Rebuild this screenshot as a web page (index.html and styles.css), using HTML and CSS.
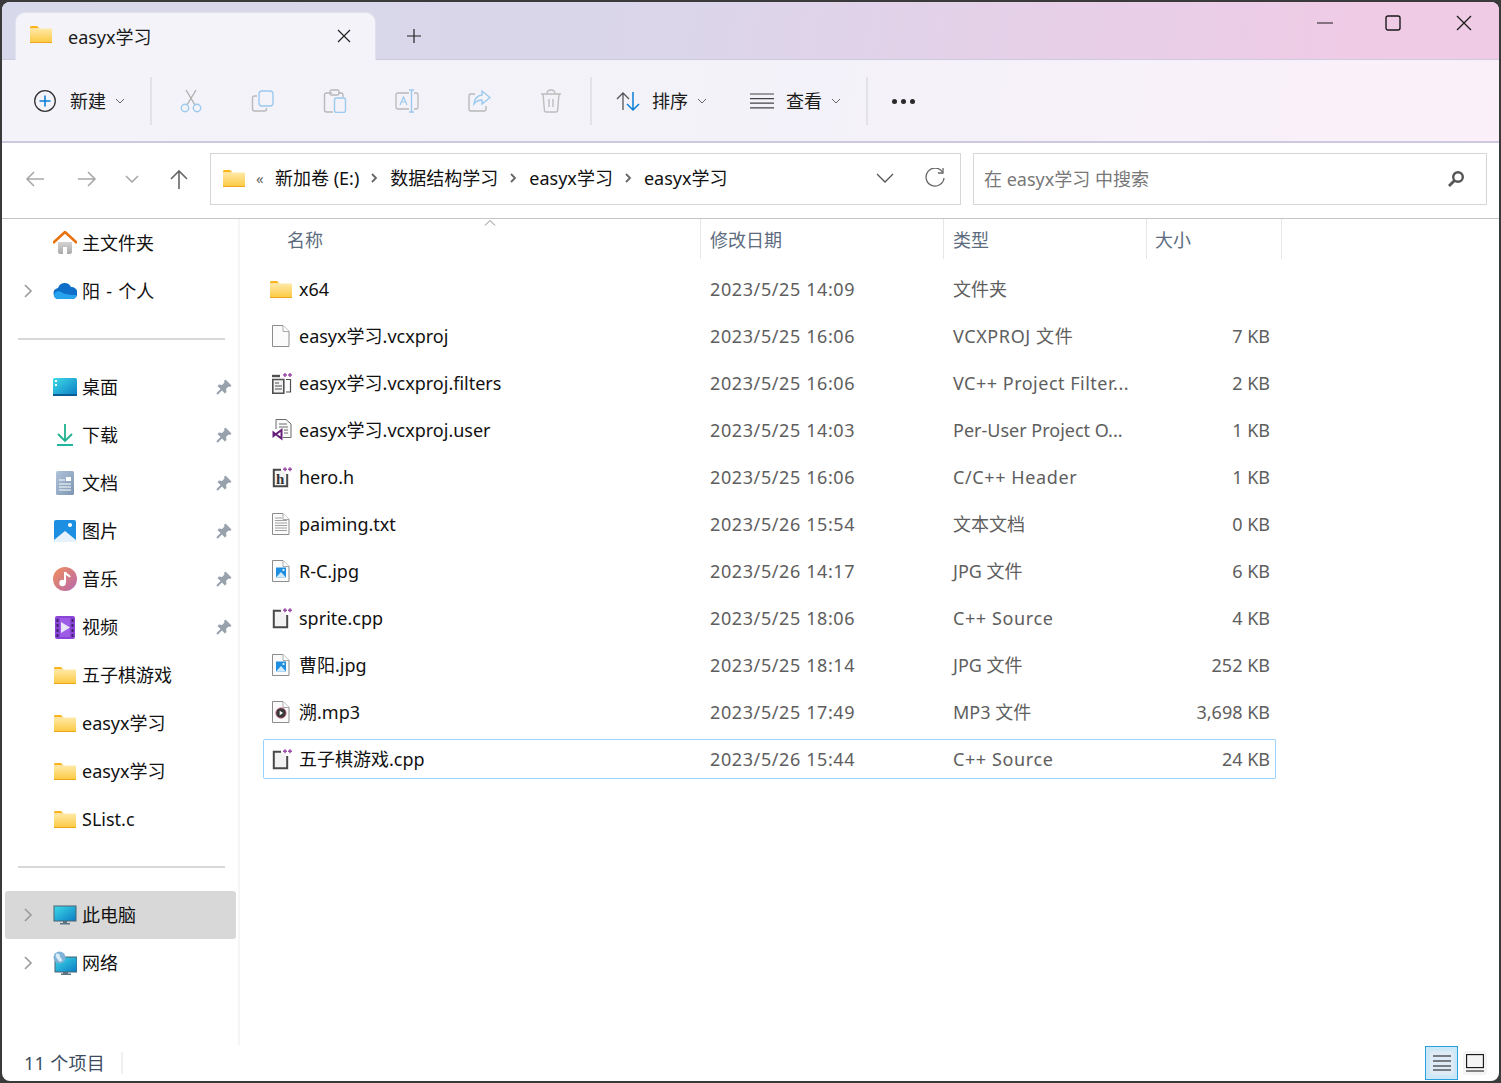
FILE: index.html
```html
<!DOCTYPE html>
<html lang="zh-CN">
<head>
	<meta charset="UTF-8">
	<title>easyx学习</title>
	<link rel="stylesheet" href="styles.css">
</head>
<body>
	<svg class="defs" width="0" height="0">
		<defs>
			<linearGradient id="g-folder" x1="0" y1="0" x2="0" y2="1">
				<stop offset="0" stop-color="#fee9a8"/><stop offset="1" stop-color="#fdc93f"/>
			</linearGradient>
			<linearGradient id="g-screen" x1="0" y1="0" x2="1" y2="1">
				<stop offset="0" stop-color="#3fdbe8"/><stop offset="1" stop-color="#0a7cc4"/>
			</linearGradient>
			<linearGradient id="g-doc" x1="0" y1="0" x2="1" y2="1">
				<stop offset="0" stop-color="#b0c4da"/><stop offset="1" stop-color="#7d95b1"/>
			</linearGradient>
			<linearGradient id="g-music" x1="0" y1="0" x2="1" y2="1">
				<stop offset="0" stop-color="#f0905a"/><stop offset="1" stop-color="#b868b0"/>
			</linearGradient>
			<linearGradient id="g-roof" x1="0" y1="0" x2="0" y2="1">
				<stop offset="0" stop-color="#d4d4d4"/><stop offset="1" stop-color="#a8a8a8"/>
			</linearGradient>
			<symbol id="i-folder" viewBox="0 0 22 17">
				<path d="M0 1.500C0 .7.7 0 1.500 0H7l2.500 2.500H0z" fill="#fbb41c"/>
				<rect y="2.500" width="22" height="14.500" fill="url(#g-folder)"/>
				<rect y="16" width="22" height="1" fill="#eca71c"/>
			</symbol>
			<symbol id="i-pin" viewBox="0 0 16 16">
				<path d="M9.500 .5l6 6L14 8l-1.500-.5L10 10l.5 3L9 14.500 1.500 7 3 5.500l3 .5 2.500-2.500L8 2z" fill="#98a2ac"/>
				<path d="M5.500 10.500L1 15" stroke="#98a2ac" stroke-width="2"/>
			</symbol>
			<symbol id="i-chev" viewBox="0 0 10 16">
				<path d="M2 2l6 6-6 6" fill="none" stroke="#9a9a9a" stroke-width="1.600"/>
			</symbol>
			<symbol id="i-down" viewBox="0 0 10 6">
				<path d="M1 1l4 4 4-4" fill="none" stroke="#666" stroke-width="1"/>
			</symbol>
			<symbol id="i-sep" viewBox="0 0 8 10">
				<path d="M2 1l4 4-4 4" fill="none" stroke="#666" stroke-width="1.800"/>
			</symbol>
			<symbol id="i-file" viewBox="0 0 20 22">
				<path d="M.5.5H11L17 6.500v15H.5z" fill="#fbfbfb" stroke="#8c8c8c"/>
				<path d="M11 .5v6h6" fill="#fff" stroke="#a8a8a8"/>
			</symbol>
			<symbol id="i-cpp" viewBox="0 0 20 22">
				<path d="M9 3.800H1.800v16.400h13.400V8" fill="#f2f2f2" stroke="#484848" stroke-width="2"/>
				<path d="M11 3.200h4M13 1.200v4M16 3.200h4M18 1.200v4" stroke="#9c4fa8" stroke-width="1.500" fill="none"/>
			</symbol>
			<symbol id="i-jpg" viewBox="0 0 20 22">
				<use href="#i-file"/>
				<rect x="4" y="7.500" width="10" height="10" fill="#1e8fe0"/>
				<path d="M4 17.500l5-5.500 5 5.500z" fill="#cfe8fa"/>
				<circle cx="11.500" cy="10" r="1.100" fill="#fff"/>
			</symbol>
		</defs>
	</svg>

	<div class="window">
		<header class="tabstrip">
			<div class="tab">
				<svg class="ico-folder"><use href="#i-folder"/></svg>
				<span class="tab-title">easyx学习</span>
				<svg class="tab-close" viewBox="0 0 14 14"><path d="M1 1l12 12M13 1L1 13" stroke="#222" stroke-width="1.200"/></svg>
			</div>
			<svg class="tab-add" viewBox="0 0 16 16"><path d="M8 1v14M1 8h14" stroke="#222" stroke-width="1.200"/></svg>
			<div class="win-btns">
				<svg class="win-min" viewBox="0 0 16 16"><path d="M0 8h16" stroke="#1a1a1a" stroke-width="1.200"/></svg>
				<svg class="win-max" viewBox="0 0 16 16"><rect x="1" y="1" width="14" height="14" rx="2" fill="none" stroke="#1a1a1a" stroke-width="1.400"/></svg>
				<svg class="win-close" viewBox="0 0 16 16"><path d="M1 1l14 14M15 1L1 15" stroke="#1a1a1a" stroke-width="1.300"/></svg>
			</div>
		</header>

		<div class="toolbar">
			<div class="tool tool-new">
				<svg class="ico-22" viewBox="0 0 22 22"><circle cx="11" cy="11" r="10.300" fill="none" stroke="#333" stroke-width="1.300"/><path d="M11 5.500v11M5.500 11h11" stroke="#0a7fd6" stroke-width="1.600"/></svg>
				<span class="tool-text">新建</span>
				<svg class="ico-down"><use href="#i-down"/></svg>
			</div>
			<i class="tool-sep"></i>
			<div class="tool-group">
				<svg class="ico-24" viewBox="0 0 24 24"><path d="M7 1l9 15M17 1L8 16" stroke="#adadad" stroke-width="1.300" fill="none"/><circle cx="6" cy="19" r="3.700" fill="none" stroke="#9cc9ee" stroke-width="1.400"/><circle cx="18" cy="19" r="3.700" fill="none" stroke="#9cc9ee" stroke-width="1.400"/></svg>
				<svg class="ico-24" viewBox="0 0 24 24"><path d="M6 7H3.500A2 2 0 0 0 1.500 9v11a2 2 0 0 0 2 2h10a2 2 0 0 0 2-2v-1" fill="none" stroke="#b9b9b9" stroke-width="1.400"/><rect x="8" y="2" width="14" height="15" rx="3" fill="none" stroke="#9cc9ee" stroke-width="1.400"/></svg>
				<svg class="ico-24" viewBox="0 0 24 24"><path d="M9 4H3.500a2 2 0 0 0-2 2v15a2 2 0 0 0 2 2H10M15 4h3a2 2 0 0 1 2 2v2" fill="none" stroke="#b9b9b9" stroke-width="1.400"/><rect x="7" y="1" width="9" height="5" rx="1.500" fill="none" stroke="#b9b9b9" stroke-width="1.300"/><rect x="11.500" y="9" width="11" height="14.500" rx="2" fill="none" stroke="#9cc9ee" stroke-width="1.400"/></svg>
				<svg class="ico-24" viewBox="0 0 24 24"><path d="M14 4H3a2 2 0 0 0-2 2v12a2 2 0 0 0 2 2h11M19 4h2a2 2 0 0 1 2 2v12a2 2 0 0 1-2 2h-2" fill="none" stroke="#b9b9b9" stroke-width="1.300"/><path d="M14 1h5M14 23h5M16.500 1v22" stroke="#9cc9ee" stroke-width="1.400" fill="none"/><path d="M5 16l3.500-8 3.500 8M6.300 13h4.400" fill="none" stroke="#9cc9ee" stroke-width="1.200"/></svg>
				<svg class="ico-24" viewBox="0 0 24 24"><path d="M8 5H4a2 2 0 0 0-2 2v13a2 2 0 0 0 2 2h13a2 2 0 0 0 2-2v-3" fill="none" stroke="#b9b9b9" stroke-width="1.400"/><path d="M15 2l8 6.500-8 6.500v-4c-4 0-6 1.500-8 4 .5-5 3.500-8.500 8-9z" fill="none" stroke="#9cc9ee" stroke-width="1.400"/></svg>
				<svg class="ico-24" viewBox="0 0 24 24"><path d="M2 5h20M4 5l1.500 17a1.500 1.500 0 0 0 1.500 1h10a1.500 1.500 0 0 0 1.500-1L20 5M8 5c0-2.500 1.500-4 4-4s4 1.500 4 4M10 10v8M14 10v8" fill="none" stroke="#bdbdbd" stroke-width="1.400"/></svg>
			</div>
			<i class="tool-sep"></i>
			<div class="tool tool-sort">
				<svg class="ico-24" viewBox="0 0 24 24"><path d="M7 21V4M1 10l6-6 6 6" fill="none" stroke="#555" stroke-width="1.300"/><path d="M17 3v18M11 15l6 6 6-6" fill="none" stroke="#0a7fd6" stroke-width="1.500"/></svg>
				<span class="tool-text">排序</span>
				<svg class="ico-down"><use href="#i-down"/></svg>
			</div>
			<div class="tool tool-view">
				<svg class="ico-24" viewBox="0 0 24 24"><path d="M0 5h24M0 9.600h24M0 14.200h24M0 18.800h24" fill="none" stroke="#444" stroke-width="1.200"/></svg>
				<span class="tool-text">查看</span>
				<svg class="ico-down"><use href="#i-down"/></svg>
			</div>
			<i class="tool-sep sep-last"></i>
			<div class="tool-more"><i></i><i></i><i></i></div>
		</div>

		<div class="addressrow">
			<svg class="nav-ico nav-back" viewBox="0 0 20 18"><path d="M19 9H2M9 2L2 9l7 7" fill="none" stroke="#a8a8a8" stroke-width="1.600"/></svg>
			<svg class="nav-ico nav-fwd" viewBox="0 0 20 18"><path d="M1 9h17M11 2l7 7-7 7" fill="none" stroke="#a8a8a8" stroke-width="1.600"/></svg>
			<svg class="nav-hist" viewBox="0 0 14 8"><path d="M1 1l6 6 6-6" fill="none" stroke="#a8a8a8" stroke-width="1.600"/></svg>
			<svg class="nav-ico nav-up" viewBox="0 0 20 20"><path d="M10 20V2M2 10l8-8 8 8" fill="none" stroke="#666" stroke-width="1.600"/></svg>
			<div class="addressbar">
				<svg class="ico-folder"><use href="#i-folder"/></svg>
				<span class="crumb-more">«</span>
				<span class="crumb">新加卷 (E:)</span>
				<svg class="ico-sep"><use href="#i-sep"/></svg>
				<span class="crumb">数据结构学习</span>
				<svg class="ico-sep"><use href="#i-sep"/></svg>
				<span class="crumb">easyx学习</span>
				<svg class="ico-sep"><use href="#i-sep"/></svg>
				<span class="crumb">easyx学习</span>
				<svg class="addr-down" viewBox="0 0 18 10"><path d="M1 1l8 8 8-8" fill="none" stroke="#555" stroke-width="1.300"/></svg>
				<svg class="addr-refresh" viewBox="0 0 20 20"><path d="M17.500 4A9 9 0 1 0 19 10" fill="none" stroke="#666" stroke-width="1.300"/><path d="M18 0v5h-5" fill="none" stroke="#666" stroke-width="1.300"/></svg>
			</div>
			<div class="searchbox">
				<span class="search-text">在 easyx学习 中搜索</span>
				<svg class="search-ico" viewBox="0 0 18 18"><circle cx="11" cy="7" r="4.800" fill="none" stroke="#555" stroke-width="2.400"/><path d="M7.500 10.500L2 16" stroke="#555" stroke-width="2.800"/></svg>
			</div>
		</div>

		<div class="main">
			<nav class="sidebar">
				<div class="side-row">
					<svg class="side-ico" viewBox="0 0 24 24"><path d="M5 11h14v10a2 2 0 0 1-2 2h-3v-7h-4v7H7a2 2 0 0 1-2-2z" fill="url(#g-roof)"/><path d="M0 12L12 1l12 11" fill="none" stroke="#e9720e" stroke-width="2.600"/></svg>
					<span>主文件夹</span>
				</div>
				<div class="side-row">
					<svg class="side-chev"><use href="#i-chev"/></svg>
					<svg class="side-ico" viewBox="0 0 24 24"><path d="M6 20a5.500 5.500 0 0 1-1-10.900A7 7 0 0 1 18 8a5 5 0 0 1 1 12z" fill="#0f6fc8"/><path d="M6 20a4 4 0 0 1-5-3.500C1 13 5 11 8 13c2 1 5 3 15 3 1 2-1 4-4 4z" fill="#27a3ee"/></svg>
					<span class="wide-word">阳 - 个人</span>
				</div>
				<hr class="side-line">
				<div class="side-row">
					<svg class="side-ico" viewBox="0 0 24 24"><rect y="3" width="24" height="18" rx="1.500" fill="url(#g-screen)"/><rect y="19" width="24" height="2" fill="#0b5c94"/><rect x="2" y="5" width="2" height="2" fill="#fff"/><rect x="2" y="9" width="2" height="2" fill="#fff"/></svg>
					<span>桌面</span>
					<svg class="pin"><use href="#i-pin"/></svg>
				</div>
				<div class="side-row">
					<svg class="side-ico" viewBox="0 0 24 24"><path d="M12 1v17M5 11l7 7 7-7" fill="none" stroke="#1eb28f" stroke-width="1.800"/><path d="M4 22h16" stroke="#1eb8a0" stroke-width="2"/></svg>
					<span>下载</span>
					<svg class="pin"><use href="#i-pin"/></svg>
				</div>
				<div class="side-row">
					<svg class="side-ico" viewBox="0 0 24 24"><rect x="3" y="0" width="18" height="24" rx="1.500" fill="url(#g-doc)"/><path d="M6 9h6M6 13h12M6 16h12M6 19h12" stroke="#fff" stroke-width="1"/><rect x="13" y="6" width="5" height="4" fill="#fff"/></svg>
					<span>文档</span>
					<svg class="pin"><use href="#i-pin"/></svg>
				</div>
				<div class="side-row">
					<svg class="side-ico" viewBox="0 0 24 24"><rect x="1" y="1" width="22" height="22" rx="2" fill="#1c8fe3"/><path d="M1 21l11-9 11 9v1a1 1 0 0 1-1 1H2a1 1 0 0 1-1-1z" fill="#e6f2fb"/><circle cx="17" cy="6" r="2" fill="#fff"/></svg>
					<span>图片</span>
					<svg class="pin"><use href="#i-pin"/></svg>
				</div>
				<div class="side-row">
					<svg class="side-ico" viewBox="0 0 24 24"><circle cx="12" cy="12" r="12" fill="url(#g-music)"/><path d="M12 5v11" stroke="#fff" stroke-width="2"/><path d="M12 5c1 3 4 3 5 5" fill="none" stroke="#fff" stroke-width="2"/><circle cx="9.500" cy="16" r="3.200" fill="#fff"/></svg>
					<span>音乐</span>
					<svg class="pin"><use href="#i-pin"/></svg>
				</div>
				<div class="side-row">
					<svg class="side-ico" viewBox="0 0 24 24"><rect x="2" y="1" width="20" height="23" rx="2" fill="#8a44d8"/><rect x="7" y="3" width="10" height="19" fill="#9c5ce6"/><path d="M3.500 4h2v3h-2zM3.500 9h2v3h-2zM3.500 14h2v3h-2zM3.500 19h2v3h-2zM18.500 4h2v3h-2zM18.500 9h2v3h-2zM18.500 14h2v3h-2zM18.500 19h2v3h-2z" fill="#43256f"/><path d="M8 7l9 5.500L8 18z" fill="#e9e3fa"/></svg>
					<span>视频</span>
					<svg class="pin"><use href="#i-pin"/></svg>
				</div>
				<div class="side-row">
					<svg class="side-folder"><use href="#i-folder"/></svg>
					<span>五子棋游戏</span>
				</div>
				<div class="side-row">
					<svg class="side-folder"><use href="#i-folder"/></svg>
					<span>easyx学习</span>
				</div>
				<div class="side-row">
					<svg class="side-folder"><use href="#i-folder"/></svg>
					<span>easyx学习</span>
				</div>
				<div class="side-row">
					<svg class="side-folder"><use href="#i-folder"/></svg>
					<span>SList.c</span>
				</div>
				<hr class="side-line">
				<div class="side-row selected">
					<svg class="side-chev"><use href="#i-chev"/></svg>
					<svg class="side-ico" viewBox="0 0 24 24"><rect x="1" y="3" width="22" height="15" fill="url(#g-screen)" stroke="#4a6272" stroke-width="1"/><path d="M10 18h4v2h-4zM7 20h10v1.500H7z" fill="#5d7382"/></svg>
					<span>此电脑</span>
				</div>
				<div class="side-row">
					<svg class="side-chev"><use href="#i-chev"/></svg>
					<svg class="side-ico" viewBox="0 0 24 24"><rect x="2" y="6" width="22" height="15" fill="url(#g-screen)" stroke="#4a6272" stroke-width="1"/><path d="M10 21h5v1.500h-5zM8 22.500h10V24H8z" fill="#5d7382"/><circle cx="6.500" cy="6.500" r="6" fill="#7fb2d6"/><path d="M3 3c2-1 4 0 4 2s2 2 2 4-3 2-4 0-3-3-2-6z" fill="#d8ecf7"/></svg>
					<span>网络</span>
				</div>
			</nav>

			<section class="files">
				<div class="file-head">
					<div class="head-cell head-name">名称<svg class="sort-arrow" viewBox="0 0 12 6"><path d="M1 5.500l5-5 5 5" fill="none" stroke="#888" stroke-width="1"/></svg></div>
					<div class="head-cell">修改日期</div>
					<div class="head-cell">类型</div>
					<div class="head-cell">大小</div>
				</div>
				<div class="file-list">
					<div class="file-row">
						<div class="file-name"><svg class="ico-folder"><use href="#i-folder"/></svg><span>x64</span></div>
						<div>2023/5/25 14:09</div><div>文件夹</div><div class="file-size"></div>
					</div>
					<div class="file-row">
						<div class="file-name"><svg class="ico-file"><use href="#i-file"/></svg><span>easyx学习.vcxproj</span></div>
						<div>2023/5/25 16:06</div><div class="type-wide">VCXPROJ 文件</div><div class="file-size">7 KB</div>
					</div>
					<div class="file-row">
						<div class="file-name">
							<svg class="ico-file" viewBox="0 0 20 22"><path d="M0 4h8" stroke="#505050" stroke-width="2.400"/><path d="M.8 7.500h11v13.700H.8z" fill="#f2f2f2" stroke="#505050" stroke-width="1.600"/><path d="M3 11h4M3 14h7M3 17h7" stroke="#505050"/><path d="M14 7.500h4.500V20H14" fill="none" stroke="#505050" stroke-width="1.200"/><path d="M11 3h4M13 1v4M16 3h4M18 1v4" stroke="#9c4fa8" stroke-width="1.500"/></svg>
							<span>easyx学习.vcxproj.filters</span>
						</div>
						<div>2023/5/25 16:06</div><div class="type-wide type-filter">VC++ Project Filter...</div><div class="file-size">2 KB</div>
					</div>
					<div class="file-row">
						<div class="file-name">
							<svg class="ico-file" viewBox="0 0 20 22"><path d="M4 10V.5h10L19 5v13.500h-8" fill="#fafafa" stroke="#6a6a6a"/><path d="M7 5h8M7 8h9M12 11h4M12 14h4" stroke="#6a6a6a"/><path d="M1.500 13.500L9.500 19.500V11L1.500 17z" fill="#fff" stroke="#68217a" stroke-width="2"/></svg>
							<span>easyx学习.vcxproj.user</span>
						</div>
						<div>2023/5/25 14:03</div><div>Per-User Project O...</div><div class="file-size">1 KB</div>
					</div>
					<div class="file-row">
						<div class="file-name">
							<svg class="ico-file" viewBox="0 0 20 22"><path d="M9 3.800H1.800v16.400h13.400V8" fill="#f2f2f2" stroke="#484848" stroke-width="2"/><text x="4" y="18" class="icon-letter">h</text><path d="M11 3.200h4M13 1.200v4M16 3.200h4M18 1.200v4" stroke="#9c4fa8" stroke-width="1.500"/></svg>
							<span>hero.h</span>
						</div>
						<div>2023/5/25 16:06</div><div class="type-wide">C/C++ Header</div><div class="file-size">1 KB</div>
					</div>
					<div class="file-row">
						<div class="file-name">
							<svg class="ico-file" viewBox="0 0 20 22"><use href="#i-file"/><path d="M3 5h7M3 7.500h12M3 10h12M3 12.500h12M3 15h12M3 17.500h12" stroke="#a0a0a0"/></svg>
							<span>paiming.txt</span>
						</div>
						<div>2023/5/26 15:54</div><div>文本文档</div><div class="file-size">0 KB</div>
					</div>
					<div class="file-row">
						<div class="file-name"><svg class="ico-file"><use href="#i-jpg"/></svg><span>R-C.jpg</span></div>
						<div>2023/5/26 14:17</div><div>JPG 文件</div><div class="file-size">6 KB</div>
					</div>
					<div class="file-row">
						<div class="file-name"><svg class="ico-file"><use href="#i-cpp"/></svg><span>sprite.cpp</span></div>
						<div>2023/5/25 18:06</div><div class="type-wide">C++ Source</div><div class="file-size">4 KB</div>
					</div>
					<div class="file-row">
						<div class="file-name"><svg class="ico-file"><use href="#i-jpg"/></svg><span>曹阳.jpg</span></div>
						<div>2023/5/25 18:14</div><div>JPG 文件</div><div class="file-size">252 KB</div>
					</div>
					<div class="file-row">
						<div class="file-name">
							<svg class="ico-file" viewBox="0 0 20 22"><use href="#i-file"/><circle cx="9" cy="12" r="5.200" fill="#3a3a3a"/><circle cx="9" cy="12" r="5.200" fill="none" stroke="#d9708a" stroke-width=".8"/><path d="M7.700 9.800v4.400l3.400-2.200z" fill="#fff"/></svg>
							<span>溯.mp3</span>
						</div>
						<div>2023/5/25 17:49</div><div>MP3 文件</div><div class="file-size">3,698 KB</div>
					</div>
					<div class="file-row focused">
						<div class="file-name"><svg class="ico-file"><use href="#i-cpp"/></svg><span>五子棋游戏.cpp</span></div>
						<div>2023/5/26 15:44</div><div class="type-wide">C++ Source</div><div class="file-size">24 KB</div>
					</div>
				</div>
			</section>
		</div>

		<footer class="statusbar">
			<span class="status-count">11 个项目</span>
			<i class="status-sep"></i>
			<div class="view-btn view-on"><div class="view-inner"><svg viewBox="0 0 18 16"><path d="M0 1h18M0 6h18M0 11h18M0 15h18" stroke="#111" stroke-width="1.100"/></svg></div></div>
			<div class="view-btn view-off"><svg viewBox="0 0 18 18"><rect x=".6" y=".6" width="16.800" height="13" fill="none" stroke="#111" stroke-width="1.100"/><path d="M0 17h18" stroke="#111" stroke-width="1.100"/></svg></div>
		</footer>
	</div>
</body>
</html>
```

FILE: styles.css
```css
* { box-sizing: border-box; }
html, body { margin: 0; padding: 0; height: 100%; }
body {
	background: #3a3a3a; padding: 2px; overflow: hidden;
	font-family: "Noto Sans", "Noto Sans CJK SC", sans-serif; font-size: 18px; line-height: 24px; color: #1a1a1a;
}
.defs { position: absolute; }
svg { display: block; flex: none; }
.icon-letter { font-family: "Liberation Serif", serif; font-size: 15px; font-weight: bold; fill: #333; }

.window {
	width: 1497px; height: 1079px; display: flex; flex-direction: column;
	background: #fff; border-radius: 8px; overflow: hidden;
}

/* title strip */
.tabstrip {
	height: 58px; flex: none; display: flex; align-items: flex-end; padding-left: 14px;
	background: linear-gradient(100deg, #d7d8ea 0%, #dbd6ea 45%, #efcbe6 90%);
	border-bottom: 1px solid #cdc9e0;
}
.tab {
	width: 359px; height: 47px; margin-bottom: -1px; display: flex; align-items: center; padding: 0 24px 0 14px;
	background: #f3f3f9; border-radius: 9px 9px 0 0; box-shadow: 0 0 0 1px #e2e2ee;
}
.ico-folder { width: 22px; height: 17px; }
.tab .ico-folder { margin-top: -4px; }
.tab-title { margin-left: 16px; flex: 1; }
.tab-close { width: 14px; height: 14px; margin-top: -2px; }
.tab-add { width: 16px; height: 16px; margin: 0 0 15px 31px; }
.win-btns { margin-left: auto; align-self: flex-start; display: flex; align-items: center; margin-top: 13px; padding-right: 27px; }
.win-min { width: 16px; height: 16px; }
.win-max { width: 16px; height: 16px; margin-left: 52px; }
.win-close { width: 16px; height: 16px; margin-left: 55px; }

/* command bar */
.toolbar {
	height: 83px; flex: none; display: flex; align-items: center; padding-left: 32px;
	background: linear-gradient(100deg, #f3f3f9 0%, #f3f2f9 50%, #fbf0f9 100%);
	border-bottom: 2px solid #cdc8e0;
}
.tool { display: flex; align-items: center; }
.tool-text { margin-left: 14px; line-height: 24px; }
.ico-22 { width: 22px; height: 22px; }
.ico-24 { width: 24px; height: 24px; }
.ico-down { width: 10px; height: 6px; margin-left: 9px; }
.tool-sep { width: 2px; height: 48px; background: #e2e2e8; margin-left: 25px; }
.tool-group { display: flex; gap: 48px; margin-left: 27px; }
.tool-group + .tool-sep { margin-left: 27px; }
.tool-sort { margin-left: 24px; }
.tool-sort .tool-text { margin-left: 12px; }
.tool-view { margin-left: 43px; }
.tool-view .tool-text { margin-left: 12px; }
.sep-last { margin-left: 25px; }
.tool-more { display: flex; gap: 4px; margin: 2px 0 0 24px; }
.tool-more i { width: 5px; height: 5px; border-radius: 50%; background: #2a2a2a; }

/* address row */
.addressrow {
	height: 76px; flex: none; display: flex; align-items: center; padding: 0 12px 3px 21px;
	border-bottom: 1px solid #c4c4c4;
}
.nav-ico { width: 20px; height: 18px; }
.nav-back { margin-left: 2px; }
.nav-fwd { margin-left: 32px; }
.nav-hist { width: 14px; height: 8px; margin-left: 28px; }
.nav-up { height: 20px; margin-left: 30px; }
.addressbar, .searchbox { height: 52px; display: flex; align-items: center; border: 1px solid #d6d6d6; }
.addressbar { width: 751px; margin-left: 21px; padding: 0 0 2px 12px; color: #111; }
.crumb-more { width: 30px; padding-left: 11px; font-size: 15px; color: #666; }
.ico-sep { width: 8px; height: 10px; margin: 0 12px 0 11px; }
.addr-down { width: 18px; height: 10px; margin-left: auto; }
.addr-refresh { width: 20px; height: 20px; margin: 0 15px 0 31px; }
.searchbox { width: 514px; margin-left: 12px; padding: 0 21px 0 10px; justify-content: space-between; color: #777; }
.search-ico { width: 18px; height: 18px; }

/* body */
.main { flex: 1; min-height: 0; display: flex; }
.sidebar { width: 238px; flex: none; padding: 0 2px 0 3px; border-right: 2px solid #f5f5f5; }
.side-row { position: relative; height: 48px; display: flex; align-items: center; padding-left: 48px; border-radius: 3px; color: #111; }
.side-row span { margin-left: 5px; }
.side-row .wide-word { word-spacing: 1.500px; }
.side-ico { width: 24px; height: 24px; }
.side-folder { width: 22px; height: 17px; margin: 0 1px; }
.side-chev { position: absolute; left: 18px; top: 16px; width: 10px; height: 16px; }
.pin { width: 16px; height: 16px; margin-left: auto; margin-right: 4px; }
.side-line { height: 2px; border: 0; background: #d8d8d8; margin: 23px 11px 23px 13px; }
.side-row.selected { background: #d8d8d8; }

/* file list */
.files { flex: 1; min-width: 0; }
.file-head { display: flex; height: 40px; color: #5c6c7e; }
.head-cell { height: 40px; padding: 9px 0 0 9px; border-right: 1px solid #e6e6e6; width: 243px; position: relative; }
.head-name { width: 461px; padding-left: 47px; }
.head-cell:nth-child(3) { width: 203px; }
.head-cell:nth-child(4) { width: 135px; padding-left: 8px; }
.sort-arrow { position: absolute; left: 244px; top: 1px; width: 12px; height: 6px; }
.file-list { display: flex; flex-direction: column; gap: 7px; width: 1013px; margin: 10px 0 0 23px; }
.file-row {
	height: 40px; display: grid; grid-template-columns: 447px 243px 202px 121px; align-items: center;
	color: #5e5e5e; border-radius: 2px;
}
.file-row > :nth-child(2) { letter-spacing: .6px; }
.file-row .type-wide { letter-spacing: .6px; }
.file-row .type-filter { letter-spacing: .5px; }
.file-row.focused { box-shadow: inset 0 0 0 1px #99d1ff; }
.file-name { display: flex; align-items: center; color: #111; position: relative; padding-left: 36px; }
.file-name svg { position: absolute; left: 7px; }
.file-name .ico-file { left: 9px; width: 20px; height: 22px; }
.file-size { text-align: right; padding-right: 6px; }

/* bottom */
.statusbar { height: 36px; flex: none; display: flex; align-items: center; padding-left: 22px; color: #3c4c60; }
.status-count { letter-spacing: .3px; }
.status-sep { width: 2px; height: 22px; background: #f0f0f0; margin-left: 16px; }
.view-btn { display: flex; align-items: center; justify-content: center; height: 34px; }
.view-on { width: 33px; margin-left: auto; background: #cce8f7; border: 1px solid #2aa0e0; }
.view-inner { width: 24px; height: 24px; display: flex; align-items: center; justify-content: center; background: #deeaf5; border-radius: 3px; }
.view-inner svg { width: 18px; height: 16px; }
.view-off { width: 24px; height: 24px; margin: 0 12px 0 5px; background: #f4f4f4; border-radius: 3px; }
.view-off svg { width: 18px; height: 18px; }
```
